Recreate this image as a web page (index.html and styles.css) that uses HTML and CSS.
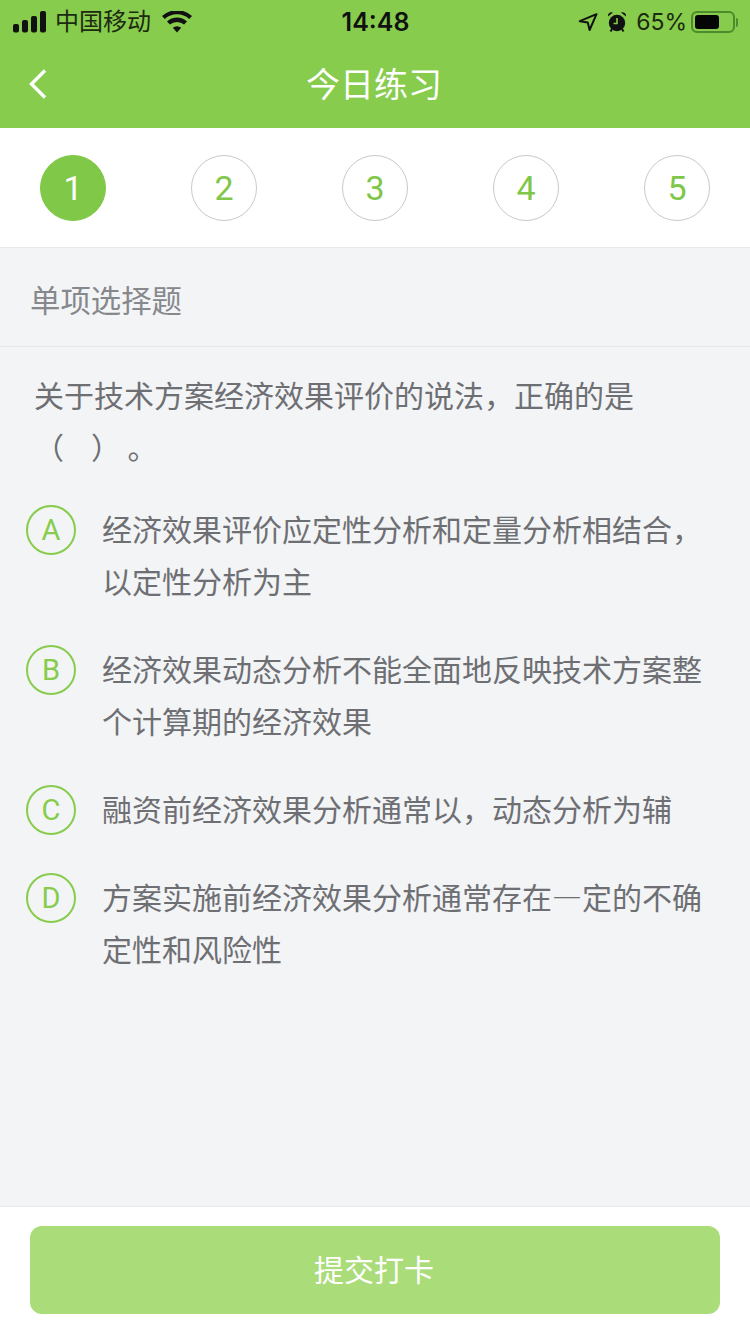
FILE: index.html
```html
<!DOCTYPE html>
<html lang="zh-CN">
<head>
<meta charset="utf-8">
<title>今日练习</title>
<link rel="stylesheet" href="styles.css">
</head>
<body>
<div class="page">
  <header class="top">
    <div class="status">
      <div class="status-left">
        <svg class="signal" width="33" height="22" viewBox="0 0 33 22"><rect x="0" y="13" width="6" height="8.500" rx="2"/><rect x="9" y="9" width="6" height="12.500" rx="2"/><rect x="18" y="5" width="6" height="16.500" rx="2"/><rect x="27" y="0" width="6" height="21.500" rx="2"/></svg>
        <span class="carrier">中国移动</span>
        <svg class="wifi" width="30" height="22" viewBox="0 0 30 22"><path d="M15 21.500 10.800 16.800a6.400 6.400 0 0 1 8.400 0z"/><path d="M7.900 13.600 5 10.400a15 15 0 0 1 20 0l-2.900 3.200a10.700 10.700 0 0 0-14.200 0z"/><path d="M2.800 8 0 4.900a22.600 22.600 0 0 1 30 0L27.200 8A18.400 18.400 0 0 0 2.800 8z"/></svg>
      </div>
      <div class="clock">14:48</div>
      <div class="status-right">
        <svg class="arrow" width="20" height="18" viewBox="0 0 20 18"><path d="M18.500 1.200 1.800 8.200l8 1.300 1.800 7.500z" fill="none" stroke="#111" stroke-width="2" stroke-linejoin="round"/></svg>
        <svg class="alarm" width="20" height="22" viewBox="0 0 20 22"><circle cx="10" cy="12" r="8.200"/><path d="M1 5.500a3.600 3.600 0 0 1 5-4zM19 5.500a3.600 3.600 0 0 0-5-4z"/><path d="M3.500 20.500 5 18M16.500 20.500 15 18" stroke="#111" stroke-width="2"/><path d="M10 7v5.500H6.500" fill="none" stroke="#87cc4c" stroke-width="1.600"/></svg>
        <span class="percent">65%</span>
        <div class="battery"><div class="battery-fill"></div></div>
        <div class="battery-nub"></div>
      </div>
    </div>
    <div class="nav">
      <svg class="back" width="20" height="32" viewBox="0 0 20 32"><path d="M17 2.500 3.500 16 17 29.500" fill="none" stroke="#fff" stroke-width="3.400"/></svg>
      <h1 class="nav-title">今日练习</h1>
    </div>
  </header>

  <nav class="steps">
    <div class="step step-on">1</div>
    <div class="step">2</div>
    <div class="step">3</div>
    <div class="step">4</div>
    <div class="step">5</div>
  </nav>

  <main class="body">
    <div class="kind">单项选择题</div>
    <div class="content">
      <p class="question">关于技术方案经济效果评价的说法，正确的是（&nbsp;&nbsp;&nbsp;&nbsp;）&nbsp;。</p>
      <ul class="options">
        <li class="option"><span class="letter">A</span><span class="option-text">经济效果评价应定性分析和定量分析相结合，以定性分析为主</span></li>
        <li class="option"><span class="letter">B</span><span class="option-text">经济效果动态分析不能全面地反映技术方案整个计算期的经济效果</span></li>
        <li class="option"><span class="letter">C</span><span class="option-text">融资前经济效果分析通常以，动态分析为辅</span></li>
        <li class="option"><span class="letter">D</span><span class="option-text">方案实施前经济效果分析通常存在—定的不确定性和风险性</span></li>
      </ul>
    </div>
  </main>

  <footer class="foot">
    <button class="submit" type="button">提交打卡</button>
  </footer>
</div>
</body>
</html>
```
FILE: styles.css
```css
* { box-sizing: border-box; }
html, body { margin: 0; padding: 0; }
body {
  font-family: "Liberation Sans", "Noto Sans CJK SC", sans-serif;
  background: #f3f4f6;
}
.page {
  width: 750px;
  height: 1334px;
  display: flex;
  flex-direction: column;
  overflow: hidden;
}

.top { background: #87cc4c; height: 128px; flex: none; }
.status {
  height: 40px;
  padding: 4px 12px 0 13px;
  display: grid;
  grid-template-columns: 1fr auto 1fr;
  align-items: center;
  color: #111;
}
.status-left, .status-right { display: flex; align-items: center; }
.status-right { justify-content: flex-end; }
.signal, .wifi, .alarm { fill: #111; }
.carrier { font-size: 24px; margin-left: 9px; line-height: 32px; color: #1c2a10; }
.wifi { margin-left: 11px; }
.clock { font-family: Inter, sans-serif; font-size: 25px; font-weight: 600; }
.arrow { margin-right: 9px; }
.alarm { margin-right: 9px; }
.percent { font-family: Inter, sans-serif; font-size: 23px; color: #1c2a10; margin-right: 4px; }
.battery {
  width: 44px;
  height: 22px;
  border: 2px solid #4f8a2c;
  border-radius: 6px;
  padding: 2px;
}
.battery-fill { width: 24px; height: 100%; background: #050505; border-radius: 3px; }
.battery-nub { width: 2px; height: 9px; background: #4f8a2c; margin-left: 1px; border-radius: 0 2px 2px 0; }

.nav {
  position: relative;
  height: 88px;
  display: flex;
  align-items: center;
  justify-content: center;
}
.back { position: absolute; left: 28px; top: 28px; }
.nav-title {
  margin: 0 2px 2px 0;
  font-size: 34px;
  font-weight: 400;
  color: #fff;
  font-family: "Noto Sans CJK SC", sans-serif;
  line-height: 88px;
}

.steps {
  flex: none;
  height: 120px;
  padding: 27px 40px 0;
  background: #fff;
  border-bottom: 1px solid #e8e9ec;
  display: flex;
  justify-content: space-between;
  align-items: flex-start;
}
.step {
  width: 66px;
  height: 66px;
  border-radius: 50%;
  border: 1px solid #c9c9c9;
  color: #80c649;
  font-family: Roboto, sans-serif;
  font-weight: 400;
  font-size: 34px;
  display: flex;
  align-items: center;
  justify-content: center;
}
.step-on { background: #7fc848; border-color: #7fc848; color: #fff; }

.body { flex: 1; min-height: 0; }
.kind {
  height: 99px;
  padding-left: 30px;
  border-bottom: 1px solid #e6e7ea;
  font-size: 30.400px;
  line-height: 103px;
  color: #86888d;
  font-family: "Noto Sans CJK SC", sans-serif;
}
.content { padding: 21px 40px 0 26px; font-family: "Noto Sans CJK SC", sans-serif; color: #6e6f73; }
.question {
  margin: 0 0 30px;
  padding-left: 8px;
  font-size: 30px;
  line-height: 52px;
}
.options { list-style: none; margin: 0; padding: 0; display: flex; flex-direction: column; gap: 36px; }
.option { display: flex; align-items: flex-start; }
.letter {
  flex: none;
  width: 50px;
  height: 50px;
  margin: 3px 26px -1px 0;
  border: 2px solid #87cc4c;
  border-radius: 50%;
  color: #87cc4c;
  font-family: Roboto, sans-serif;
  font-weight: 400;
  font-size: 29px;
  display: flex;
  align-items: center;
  justify-content: center;
}
.option-text { font-size: 30px; line-height: 52px; }

.foot {
  flex: none;
  height: 128px;
  padding: 19px 30px 20px;
  background: #fff;
  border-top: 1px solid #e8e9ec;
}
.submit {
  display: block;
  width: 100%;
  height: 88px;
  border: 0;
  border-radius: 12px;
  background: #aadc7a;
  color: #fff;
  font-family: "Noto Sans CJK SC", sans-serif;
  font-size: 30px;
  padding: 0 2px 5px 0;
}
```
